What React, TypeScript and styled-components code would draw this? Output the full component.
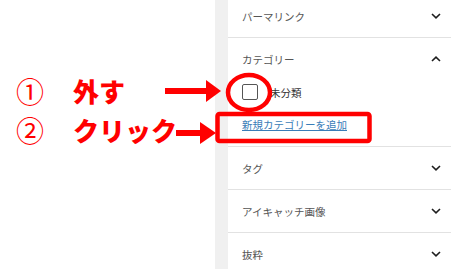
import React from "react";
import styled, { createGlobalStyle } from "styled-components";

const GlobalStyle = createGlobalStyle`
  html, body {
    margin: 0;
    padding: 0;
    background: #ffffff;
    overflow: hidden;
  }
  * {
    box-sizing: border-box;
  }
`;

const JP = `"Noto Sans CJK JP", "Noto Sans", sans-serif`;

const sections = [
  { title: "パーマリンク", open: false },
  { title: "カテゴリー", open: true },
  { title: "タグ", open: false },
  { title: "アイキャッチ画像", open: false },
  { title: "抜粋", open: false },
];

const Chevron = ({ up }: { up?: boolean }) => (
  <svg width="10" height="6" viewBox="0 0 10 6">
    <path
      d={up ? "M1 5 L5 1.2 L9 5" : "M1 1 L5 4.8 L9 1"}
      fill="none"
      stroke="#1e1e1e"
      strokeWidth="1.6"
    />
  </svg>
);

const App = () => {
  return (
    <Page>
      <GlobalStyle />
      <LeftArea>
        <Note>
          <Num>①</Num>
          <NoteText>外す</NoteText>
        </Note>
        <Note>
          <Num>②</Num>
          <NoteText>クリック</NoteText>
        </Note>
      </LeftArea>
      <Gutter />
      <Panel>
        {sections.map((s) => (
          <Section key={s.title}>
            <SectionHead>
              <HeadTitle>{s.title}</HeadTitle>
              <Chevron up={s.open} />
            </SectionHead>
            {s.open && (
              <SectionBody>
                <CheckRow>
                  <Checkbox />
                  <CheckLabel>未分類</CheckLabel>
                </CheckRow>
                <AddLink>新規カテゴリーを追加</AddLink>
              </SectionBody>
            )}
          </Section>
        ))}
      </Panel>
      <Marks width="451" height="269" viewBox="0 0 451 269">
        {/* arrow 1 */}
        <rect x="165" y="88" width="44" height="6" fill="#ff0000" />
        <polygon points="206,80 221,91 206,102" fill="#ff0000" />
        {/* arrow 2 */}
        <rect x="176" y="130" width="27" height="6" fill="#ff0000" />
        <polygon points="200,122 216,133 200,144" fill="#ff0000" />
        {/* circle around checkbox */}
        <ellipse
          cx="249"
          cy="92.5"
          rx="21"
          ry="17.5"
          fill="none"
          stroke="#ff0000"
          strokeWidth="4.5"
        />
        {/* box around link */}
        <rect
          x="217.5"
          y="114"
          width="152"
          height="27"
          rx="2"
          fill="none"
          stroke="#ff0000"
          strokeWidth="4.5"
        />
      </Marks>
    </Page>
  );
};

const Page = styled.div`
  position: relative;
  width: 451px;
  height: 269px;
  display: flex;
  overflow: hidden;
  font-family: ${JP};
`;

const LeftArea = styled.div`
  width: 215px;
  flex-shrink: 0;
  background: #ffffff;
  display: flex;
  flex-direction: column;
  padding-top: 77px;
  row-gap: 11px;
`;

const Note = styled.div`
  display: flex;
  align-items: center;
  height: 28px;
  color: #ff0000;
  font-weight: 900;
`;

const Num = styled.span`
  width: 73px;
  padding-left: 16px;
  font-size: 28px;
  font-weight: 400;
  line-height: 28px;
`;

const NoteText = styled.span`
  font-size: 26px;
  line-height: 28px;
`;

const Gutter = styled.div`
  width: 13px;
  flex-shrink: 0;
  background: #f0f0f0;
`;

const Panel = styled.div`
  flex: 1;
  display: flex;
  flex-direction: column;
  margin-top: -5px;
  background: #ffffff;
`;

const Section = styled.div`
  border-bottom: 1px solid #e2e2e2;
`;

const SectionHead = styled.div`
  height: 42px;
  display: flex;
  align-items: center;
  justify-content: space-between;
  padding: 0 10px 0 14px;
`;

const HeadTitle = styled.span`
  font-size: 10.5px;
  color: #555555;
`;

const SectionBody = styled.div`
  display: flex;
  flex-direction: column;
  padding: 4px 14px 14px;
  row-gap: 18px;
`;

const CheckRow = styled.div`
  display: flex;
  align-items: center;
  column-gap: 12px;
`;

const Checkbox = styled.span`
  width: 16px;
  height: 16px;
  border: 1.5px solid #555555;
  border-radius: 2px;
  background: #ffffff;
`;

const CheckLabel = styled.span`
  font-size: 10.5px;
  color: #333333;
`;

const AddLink = styled.a`
  font-size: 10.5px;
  color: #3a7db8;
  text-decoration: underline;
  line-height: 14px;
  cursor: pointer;
`;

const Marks = styled.svg`
  position: absolute;
  left: 0;
  top: 0;
  pointer-events: none;
`;

export default App;
